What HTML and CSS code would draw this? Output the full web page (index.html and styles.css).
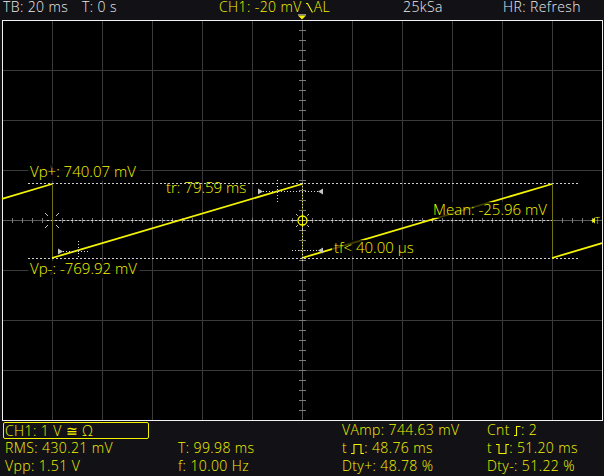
FILE: index.html
```html
<!DOCTYPE html>
<html>
<head>
    <meta charset="UTF-8">
    <title>CH1 Scope</title>
    <link rel="stylesheet" href="styles.css">
</head>
<body>
    <div class="scope">
        <header class="status-bar">
            <span class="status status-tb">TB: 20 ms</span>
            <span class="status status-t">T: 0 s</span>
            <span class="status status-ch">CH1: -20 mV <svg class="sym sym-fall" viewBox="0 0 7 10"><polyline points="0,0.5 1.5,0.5 6.5,9.5"/></svg>AL</span>
            <span class="status status-rate">25kSa</span>
            <span class="status status-mode">HR: Refresh</span>
            <!-- trigger position marker on top of the graticule -->
            <svg class="trig-pos" viewBox="0 0 8 6"><rect x="0" y="0" width="8" height="1.5" fill="#8a8a8a"/><polygon points="0,1.5 8,1.5 4,5.5" fill="#f4f400"/></svg>
        </header>

        <svg class="screen" width="604" height="401" viewBox="0 20 604 401">
            <defs>
                <pattern id="grid" x="2" y="20" width="50" height="50" patternUnits="userSpaceOnUse">
                    <path d="M0.5 0V50M0 0.5H50" stroke="#3a3a3a" stroke-width="1" fill="none"/>
                </pattern>
                <pattern id="tickH" x="2" y="218" width="10" height="5" patternUnits="userSpaceOnUse">
                    <rect x="0" y="0" width="1" height="5" fill="#7a7a7a"/>
                </pattern>
                <pattern id="tickV" x="299" y="20" width="7" height="10" patternUnits="userSpaceOnUse">
                    <rect x="0" y="0" width="7" height="1" fill="#7a7a7a"/>
                </pattern>
            </defs>

            <!-- graticule -->
            <rect x="0" y="20" width="604" height="401" fill="#121116"/>
            <rect x="2.5" y="20.5" width="600" height="400" fill="#000"/>
            <rect x="3" y="21" width="599" height="399" fill="url(#grid)"/>
            <path d="M302.5 21V420M3 220.5H602" stroke="#5a5a5a" stroke-width="1"/>
            <rect x="3" y="218" width="599" height="5" fill="url(#tickH)"/>
            <rect x="299" y="21" width="7" height="399" fill="url(#tickV)"/>
            <rect x="2.5" y="20.5" width="600" height="400" fill="none" stroke="#f2f2f2" stroke-width="1"/>

            <!-- peak and mean levels -->
            <path class="level" d="M28 183.5H578M28 258.5H578M47 220.5H553"/>
            <rect x="50" y="165" width="3" height="3" fill="#666"/>
            <rect x="50" y="272" width="3" height="3" fill="#666"/>

            <!-- falling edges -->
            <path class="drop" d="M52.5 184V258M302.5 184V258M552.5 184V258"/>

            <!-- waveform -->
            <path class="trace" d="M2 198.8L52 184M52 258L302 184M302 258L552 184M552 258L602 243.2"/>

            <!-- rise / fall time markers -->
            <path class="marker" d="M263 191.5H318M277.5 180V203M302.5 183V210M302.5 230V262M292 250.5H318M63 251.5H88M78.5 241V258"/>
            <polygon class="arrow" points="258,188.5 263,191.5 258,194.5"/>
            <polygon class="arrow" points="323,188.5 318,191.5 323,194.5"/>
            <polygon class="arrow" points="323,247.5 318,250.5 323,253.5"/>
            <polygon class="arrow" points="58,248.5 63,251.5 58,254.5"/>

            <!-- mean cursor -->
            <path class="spark" d="M45 213L48 216M59 213L56 216M45 228L48 225M59 228L56 225"/>

            <!-- trigger point -->
            <path class="spark" d="M302.5 211V213.5M302.5 227.5V230M293 220.5H295.5M309.5 220.5H312M296 214L297.8 215.8M309 214L307.2 215.8M296 227L297.8 225.2M309 227L307.2 225.2"/>
            <circle cx="302.5" cy="220.5" r="4.5" fill="none" stroke="#f4f400" stroke-width="1.3"/>
            <path d="M302.5 214V227" stroke="#f4f400" stroke-width="1"/>

            <!-- trigger level -->
            <polygon points="591,220.5 595,217.5 595,223.5" fill="#f4f400"/>
            <text class="trig-level" x="595" y="224">T</text>

            <!-- cursor readouts -->
            <rect class="label-bg" x="28" y="164" width="112" height="17"/>
            <text class="cursor-label" x="30" y="177">Vp+: 740.07 mV</text>
            <rect class="label-bg" x="28" y="261" width="112" height="17"/>
            <text class="cursor-label" x="30" y="274">Vp-: -769.92 mV</text>
            <text class="cursor-label" x="166" y="193">tr: 79.59 ms</text>
            <rect class="label-bg" x="332" y="240" width="113" height="16"/>
            <text class="cursor-label" x="334" y="253">tf&lt; 40.00 µs</text>
            <rect class="label-bg" x="431" y="202" width="117" height="16"/>
            <text class="cursor-label" x="433" y="215">Mean: -25.96 mV</text>
        </svg>

        <footer class="readout">
            <div class="cell ch-box">CH1: 1 V ≅ Ω</div>
            <div class="cell"></div>
            <div class="cell">VAmp: 744.63 mV</div>
            <div class="cell">Cnt <svg class="sym sym-edge" viewBox="0 0 7 10"><polyline points="0,9.5 2.5,9.5 2.5,0.5 6.5,0.5"/></svg>: 2</div>

            <div class="cell lead">RMS: 430.21 mV</div>
            <div class="cell">T: 99.98 ms</div>
            <div class="cell">t <svg class="sym sym-pulse" viewBox="0 0 13 10"><polyline points="0,9.5 3,9.5 3,0.5 10,0.5 10,9.5 13,9.5"/></svg>: 48.76 ms</div>
            <div class="cell">t <svg class="sym sym-pulse" viewBox="0 0 13 10"><polyline points="0,0.5 3,0.5 3,9.5 10,9.5 10,0.5 13,0.5"/></svg>: 51.20 ms</div>

            <div class="cell lead">Vpp: 1.51 V</div>
            <div class="cell">f: 10.00 Hz</div>
            <div class="cell">Dty+: 48.78 %</div>
            <div class="cell">Dty-: 51.22 %</div>
        </footer>
    </div>
</body>
</html>
```

FILE: styles.css
```css
:root {
    --scope-font: 'Open Sans', 'DejaVu Sans', sans-serif;
    --ch1: #f4f400;
    --panel: #121116;
}

* {
    margin: 0;
    padding: 0;
    box-sizing: border-box;
}

body {
    width: 604px;
    height: 476px;
    overflow: hidden;
    background: var(--panel);
    font-family: var(--scope-font);
    font-weight: 300;
    color: #ececec;
}

/* top status line */
.status-bar {
    position: relative;
    display: flex;
    height: 20px;
    padding-left: 3px;
    font-size: 14px;
    line-height: 14px;
    letter-spacing: 0.4px;
    white-space: nowrap;
}

.status-tb { width: 79px; }
.status-t { width: 137px; }
.status-ch { width: 184px; color: var(--ch1); }
.status-rate { width: 100px; }

.trig-pos {
    position: absolute;
    left: 298px;
    top: 14px;
    width: 8px;
    height: 6px;
}

/* small edge / pulse glyphs */
.sym {
    display: inline-block;
    height: 10px;
    fill: none;
    stroke: currentColor;
    stroke-width: 1.1;
    vertical-align: -1px;
}

.sym-fall { width: 7px; margin-right: 1px; }
.sym-edge { width: 7px; }
.sym-pulse { width: 13px; }

/* screen area */
.screen {
    display: block;
}

.level {
    fill: none;
    stroke: #cfcfcf;
    stroke-width: 1;
    stroke-dasharray: 2 2;
}

.drop {
    fill: none;
    stroke: #727214;
    stroke-width: 1;
}

.trace {
    fill: none;
    stroke: var(--ch1);
    stroke-width: 1.8;
}

.marker {
    fill: none;
    stroke: #d8d8d8;
    stroke-width: 1;
    stroke-dasharray: 1 2;
}

.arrow {
    fill: #c4c4c4;
}

.spark {
    fill: none;
    stroke: #c8c8c8;
    stroke-width: 1;
}

.label-bg {
    fill: rgba(0, 0, 0, 0.75);
}

.cursor-label {
    font-family: var(--scope-font);
    font-size: 15px;
    font-weight: 300;
    fill: var(--ch1);
}

.trig-level {
    font-family: var(--scope-font);
    font-size: 9px;
    fill: var(--ch1);
}

/* measurement readouts */
.readout {
    display: grid;
    grid-template-columns: 175px 164px 145px 1fr;
    grid-auto-rows: 18px;
    padding: 1px 0 0 3px;
    font-size: 14px;
    line-height: 16px;
    letter-spacing: 0.4px;
    color: var(--ch1);
    white-space: nowrap;
}

.ch-box {
    width: 146px;
    height: 17px;
    padding-left: 1px;
    border: 1px solid var(--ch1);
    border-radius: 2px;
    line-height: 15px;
}

.lead {
    padding-left: 2px;
}
```
